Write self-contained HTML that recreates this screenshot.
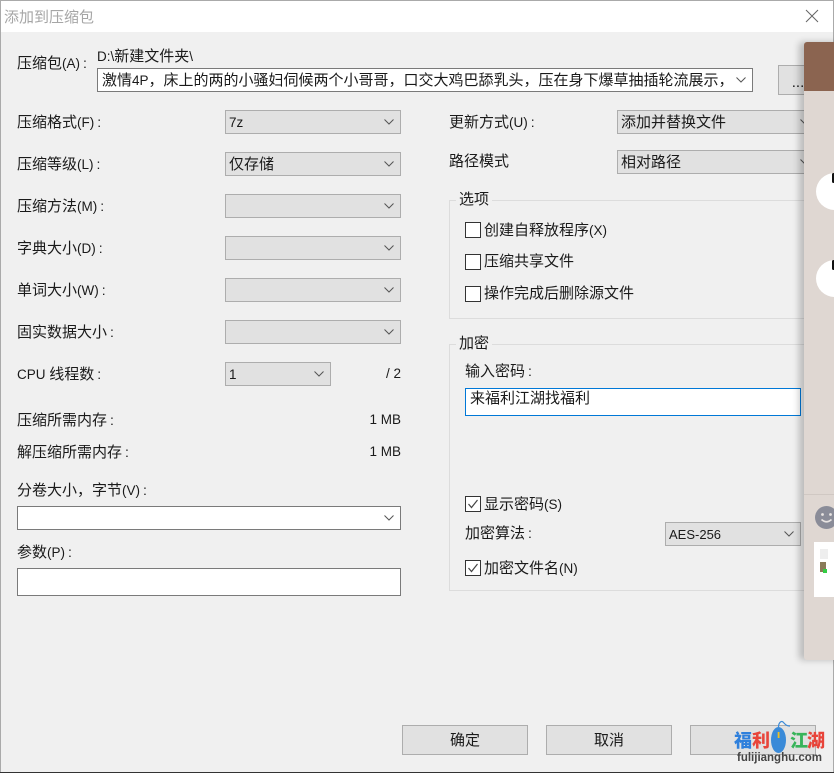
<!DOCTYPE html>
<html><head><meta charset="utf-8"><style>
html,body{margin:0;padding:0;background:#f0f0f0}
#w{position:relative;width:834px;height:773px;overflow:hidden;background:#f0f0f0;font-family:"Liberation Sans","Noto Sans CJK SC",sans-serif;font-size:15px;color:#1a1a1a}
em{font-style:normal;font-size:13.5px}
.q{font-style:normal;font-size:14px;padding-left:3px}
.t{position:absolute;line-height:20px;height:20px;white-space:nowrap;margin-top:1px}
.t.m{margin-top:0}
.c,.b,.i{position:absolute;box-sizing:border-box}
.c{background:#e1e1e1;border:1px solid #adadad}
.c.w{background:#fff;border-color:#7a7a7a}
.c svg{position:absolute;right:5px;top:50%;margin-top:-4px;width:12px;height:8px}
.c span{position:absolute;left:3px;top:1px;line-height:22px;white-space:nowrap}
.b{background:#e1e1e1;border:1px solid #adadad;text-align:center;line-height:30px}
.i{background:#fff;border:1px solid #7a7a7a}
.k{position:absolute;box-sizing:border-box;width:16px;height:16px;background:#fff;border:1px solid #333}
.k svg{position:absolute;left:1px;top:1px;width:12px;height:12px}
.g{position:absolute;box-sizing:border-box;border:1px solid #dcdcdc}
.l{position:absolute;background:#f0f0f0;padding:0 3px;line-height:22px;height:20px}
.f{font-family:'Noto Sans CJK SC',sans-serif;font-weight:900;font-size:18px}
</style></head><body><div id="w">
<svg width="0" height="0" style="position:absolute"><defs><symbol id="a" viewBox="0 0 12 8"><polyline points="1.5,1.5 6,6 10.5,1.5" fill="none" stroke="#555" stroke-width="1"/></symbol><symbol id="v" viewBox="0 0 12 12"><polyline points="1.5,6 4.5,9.5 10.5,2" fill="none" stroke="#444" stroke-width="1.2"/></symbol></defs></svg>

<div style="position:absolute;left:0;top:0;width:834px;height:32px;background:#fff"></div>
<div style="position:absolute;left:0;top:0;width:834px;height:1px;background:#aaa"></div>
<div style="position:absolute;left:0;top:0;width:1px;height:773px;background:#aaa"></div>
<div style="position:absolute;left:833px;top:0;width:1px;height:773px;background:#aaa"></div>
<div style="position:absolute;left:0;top:772px;width:834px;height:1px;background:#333"></div>
<div class="t" style="left:4px;top:7px;color:#a6a6a6">添加到压缩包</div>
<svg style="position:absolute;left:805px;top:9px" width="14" height="14"><path d="M1 1L13 13M13 1L1 13" stroke="#666" stroke-width="1" fill="none"/></svg>

<div class="t m" style="left:17px;top:53px">压缩包<em>(A)</em><i class="q">:</i></div>
<div class="t" style="left:97px;top:46px"><em>D:\</em>新建文件夹<em>\</em></div>
<div class="c w" style="left:97px;top:68px;width:656px;height:24px"><span style="left:4px">激情<em>4P</em>，床上的两的小骚妇伺候两个小哥哥，口交大鸡巴舔乳头，压在身下爆草抽插轮流展示，</span><svg viewBox="0 0 12 8"><use href="#a"/></svg></div>
<div class="b" style="left:778px;top:65px;width:40px;height:30px;line-height:34px">...</div>

<div class="t m" style="left:17px;top:112px">压缩格式<em>(F)</em><i class="q">:</i></div>
<div class="c" style="left:225px;top:110px;width:176px;height:24px"><span><em>7z</em></span><svg viewBox="0 0 12 8"><use href="#a"/></svg></div>
<div class="t m" style="left:17px;top:154px">压缩等级<em>(L)</em><i class="q">:</i></div>
<div class="c" style="left:225px;top:152px;width:176px;height:24px"><span>仅存储</span><svg viewBox="0 0 12 8"><use href="#a"/></svg></div>
<div class="t m" style="left:17px;top:196px">压缩方法<em>(M)</em><i class="q">:</i></div>
<div class="c" style="left:225px;top:194px;width:176px;height:24px"><svg viewBox="0 0 12 8"><use href="#a"/></svg></div>
<div class="t m" style="left:17px;top:238px">字典大小<em>(D)</em><i class="q">:</i></div>
<div class="c" style="left:225px;top:236px;width:176px;height:24px"><svg viewBox="0 0 12 8"><use href="#a"/></svg></div>
<div class="t m" style="left:17px;top:280px">单词大小<em>(W)</em><i class="q">:</i></div>
<div class="c" style="left:225px;top:278px;width:176px;height:24px"><svg viewBox="0 0 12 8"><use href="#a"/></svg></div>
<div class="t m" style="left:17px;top:322px">固实数据大小<i class="q">:</i></div>
<div class="c" style="left:225px;top:320px;width:176px;height:24px"><svg viewBox="0 0 12 8"><use href="#a"/></svg></div>
<div class="t m" style="left:17px;top:364px"><em>CPU </em>线程数<i class="q">:</i></div>
<div class="c" style="left:225px;top:362px;width:106px;height:24px"><span><em>1</em></span><svg viewBox="0 0 12 8"><use href="#a"/></svg></div>
<div class="t m" style="right:433px;top:364px"><em>/ 2</em></div>
<div class="t m" style="left:17px;top:410px">压缩所需内存<i class="q">:</i></div>
<div class="t m" style="right:433px;top:410px"><em>1 MB</em></div>
<div class="t m" style="left:17px;top:442px">解压缩所需内存<i class="q">:</i></div>
<div class="t m" style="right:433px;top:442px"><em>1 MB</em></div>
<div class="t m" style="left:17px;top:480px">分卷大小，字节<em>(V)</em><i class="q">:</i></div>
<div class="c w" style="left:17px;top:506px;width:384px;height:24px"><svg viewBox="0 0 12 8"><use href="#a"/></svg></div>
<div class="t m" style="left:17px;top:542px">参数<em>(P)</em><i class="q">:</i></div>
<div class="i" style="left:17px;top:568px;width:384px;height:28px"></div>

<div class="t m" style="left:449px;top:112px">更新方式<em>(U)</em><i class="q">:</i></div>
<div class="c" style="left:617px;top:110px;width:200px;height:24px"><span>添加并替换文件</span><svg viewBox="0 0 12 8"><use href="#a"/></svg></div>
<div class="t m" style="left:449px;top:152px">路径模式</div>
<div class="c" style="left:617px;top:150px;width:200px;height:24px"><span>相对路径</span><svg viewBox="0 0 12 8"><use href="#a"/></svg></div>

<div class="g" style="left:449px;top:200px;width:380px;height:119px"></div>
<div class="l" style="left:456px;top:189px">选项</div>
<div class="k" style="left:465px;top:222px"></div><div class="t" style="left:484px;top:220px">创建自释放程序<em>(X)</em></div>
<div class="k" style="left:465px;top:254px"></div><div class="t m" style="left:484px;top:252px">压缩共享文件</div>
<div class="k" style="left:465px;top:286px"></div><div class="t m" style="left:484px;top:284px">操作完成后删除源文件</div>

<div class="g" style="left:449px;top:344px;width:380px;height:247px"></div>
<div class="l" style="left:456px;top:333px">加密</div>
<div class="t m" style="left:465px;top:361px">输入密码<i class="q">:</i></div>
<div class="i" style="left:465px;top:388px;width:336px;height:28px;border-color:#0078d7"></div>
<div class="t" style="left:470px;top:388px">来福利江湖找福利</div>
<div class="k" style="left:465px;top:496px"><svg viewBox="0 0 12 12"><use href="#v"/></svg></div><div class="t" style="left:484px;top:494px">显示密码<em>(S)</em></div>
<div class="t m" style="left:465px;top:523px">加密算法<i class="q">:</i></div>
<div class="c" style="left:665px;top:522px;width:136px;height:24px"><span><em style="font-size:13px">AES-256</em></span><svg viewBox="0 0 12 8"><use href="#a"/></svg></div>
<div class="k" style="left:465px;top:560px"><svg viewBox="0 0 12 12"><use href="#v"/></svg></div><div class="t" style="left:484px;top:558px">加密文件名<em>(N)</em></div>

<div class="b" style="left:402px;top:725px;width:126px;height:30px">确定</div>
<div class="b" style="left:546px;top:725px;width:126px;height:30px">取消</div>
<div class="b" style="left:690px;top:725px;width:126px;height:30px"></div>

<div style="position:absolute;left:804px;top:42px;width:40px;height:618px;background:#dfd7d2;border-radius:3px;box-shadow:-5px 0 7px rgba(0,0,0,.22)">
<div style="position:absolute;left:0;top:0;width:40px;height:49px;background:#8b6450;border-radius:3px 3px 0 0"></div>
<div style="position:absolute;left:0;top:452px;width:40px;height:1px;background:#d0c8c3"></div>
<div style="position:absolute;left:12px;top:131px;width:38px;height:37px;border-radius:50%;background:#fff"></div>
<div style="position:absolute;left:28px;top:131px;width:3px;height:10px;border-radius:2px;background:#111"></div>
<div style="position:absolute;left:12px;top:218px;width:38px;height:37px;border-radius:50%;background:#fff"></div>
<div style="position:absolute;left:28px;top:218px;width:3px;height:10px;border-radius:2px;background:#111"></div>
<svg style="position:absolute;left:11px;top:464px" width="23" height="23"><circle cx="11.5" cy="11.5" r="11.5" fill="#8a8c98"/><circle cx="7.5" cy="8.5" r="1.4" fill="#e8e4e2"/><circle cx="15.5" cy="8.5" r="1.4" fill="#e8e4e2"/><path d="M6.5 13.5Q11.5 18 16.5 13.5" stroke="#e8e4e2" stroke-width="1.6" fill="none"/></svg>
<div style="position:absolute;left:10px;top:500px;width:30px;height:55px;background:#fff"></div>
<div style="position:absolute;left:16px;top:507px;width:8px;height:10px;background:#eee"></div>
<div style="position:absolute;left:16px;top:520px;width:6px;height:10px;background:#8a7a58"></div>
<div style="position:absolute;left:19px;top:527px;width:4px;height:4px;background:#33cc44"></div>
</div>

<div class="t f" style="left:734px;top:729px;color:#2f80dc">福</div>
<div class="t f" style="left:752px;top:729px;color:#e8443a">利</div>
<div class="t f" style="left:790px;top:729px;color:#38b45a">江</div>
<div class="t f" style="left:807px;top:729px;color:#e8443a">湖</div>
<svg style="position:absolute;left:768px;top:718px" width="32" height="38"><path d="M10.5 9C10.5 5 13 2.5 15 4C17 6 18 8 22 8" stroke="#3a8ad8" stroke-width="1.2" fill="none"/><ellipse cx="10.5" cy="22" rx="7.5" ry="13" fill="#3a8ad8"/><rect x="9.7" y="14" width="1.8" height="6" fill="#f0c020"/></svg>
<div class="t" style="left:737px;top:747px;font-weight:bold;font-size:11.5px;color:#444">fulijianghu.com</div>
</div></body></html>
